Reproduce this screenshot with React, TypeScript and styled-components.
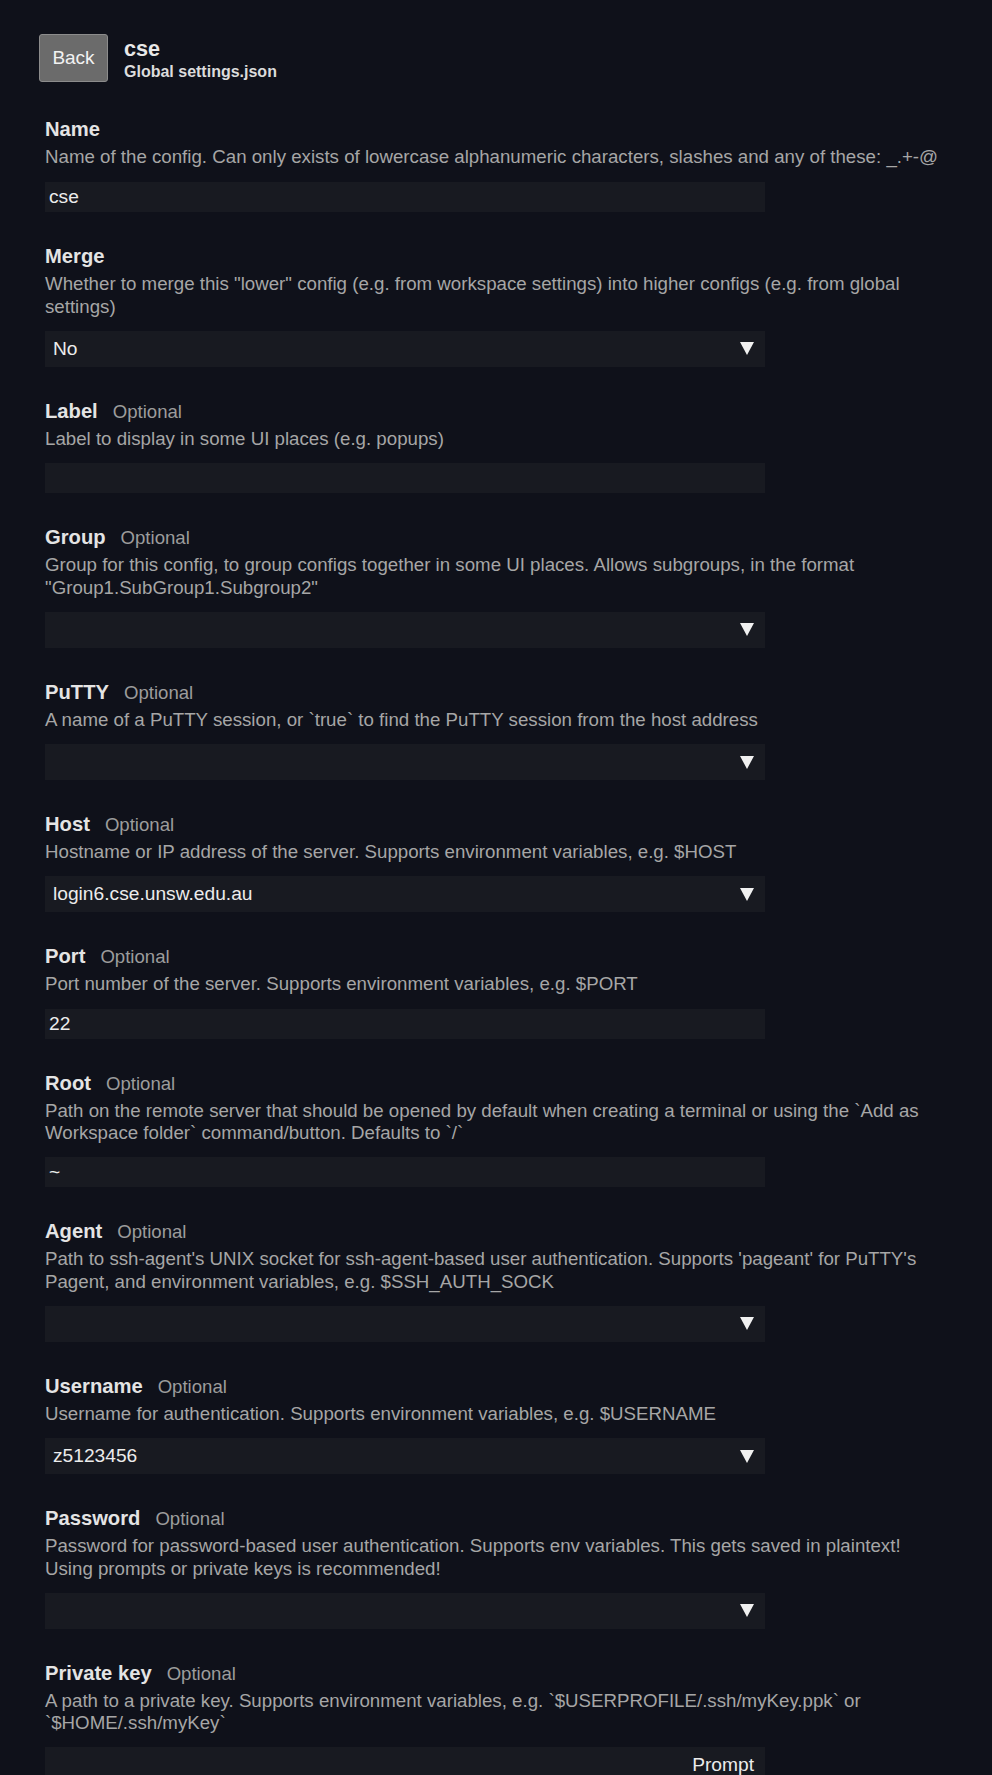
import React from "react";
import styled, { createGlobalStyle } from "styled-components";

const GlobalStyle = createGlobalStyle`
  html, body {
    margin: 0;
    padding: 0;
    background: #0f111a;
  }
  body {
    font-family: "Liberation Sans", Arial, sans-serif;
    color: #e6e6e6;
  }
`;

const Page = styled.div`
  min-height: 1775px;
  box-sizing: border-box;
  padding: 34px 45px 0 39px;
  background: #0f111a;
`;

const Header = styled.header`
  display: flex;
  align-items: flex-start;
  gap: 16px;
`;

const BackButton = styled.button`
  width: 69px;
  height: 48px;
  box-sizing: border-box;
  background: #6b6b6b;
  border: 1px solid #8c8c8c;
  border-radius: 3px;
  color: #f2f2f2;
  font-family: "Liberation Sans", Arial, sans-serif;
  font-size: 19px;
  padding: 0;
  cursor: pointer;
`;

const TitleBlock = styled.div`
  display: flex;
  flex-direction: column;
  padding-top: 1.5px;
`;

const Title = styled.div`
  font-size: 21.6px;
  line-height: 26px;
  font-weight: bold;
  color: #e8e8e8;
`;

const Subtitle = styled.div`
  font-size: 16px;
  line-height: 18px;
  font-weight: bold;
  color: #dcdcdc;
  margin-top: 1px;
`;

const Form = styled.div`
  margin: 36px 0 0 6px;
  display: flex;
  flex-direction: column;
  gap: 33.2px;
`;

const Field = styled.section`
  display: flex;
  flex-direction: column;
`;

const LabelRow = styled.div`
  display: flex;
  align-items: baseline;
  gap: 15px;
  height: 23px;
  line-height: 23px;
`;

const LabelText = styled.span`
  font-size: 20.2px;
  font-weight: bold;
  color: #e4e4e4;
`;

const OptionalTag = styled.span`
  font-size: 18.6px;
  color: #9c9c9c;
`;

const Description = styled.div`
  margin-top: 5px;
  font-size: 18.7px;
  line-height: 22.3px;
  color: #a6a6a6;
`;

const Control = styled.div<{ $tall?: boolean; $spaced?: boolean }>`
  margin-top: ${(p) => (p.$spaced ? "14px" : "12.8px")};
  width: 720px;
  height: ${(p) => (p.$tall ? "36px" : "30px")};
  box-sizing: border-box;
  background: #181a21;
  display: flex;
  align-items: center;
  padding: ${(p) => (p.$tall ? "0 11px 0 8px" : "0 4px")};
  font-size: 19.2px;
  color: #ececec;
`;

const Value = styled.span`
  flex: 1;
  white-space: nowrap;
`;

const RightValue = styled.span`
  flex: 1;
  text-align: right;
`;

const Arrow = () => (
  <svg width="14" height="13" viewBox="0 0 14 13" aria-hidden="true">
    <polygon points="0,0 14,0 7,13" fill="#f0f0f0" />
  </svg>
);

type Kind = "input" | "select" | "prompt";

interface FieldDef {
  label: string;
  optional?: boolean;
  desc: string;
  kind: Kind;
  value?: string;
  spaced?: boolean;
}

const fields: FieldDef[] = [
  {
    label: "Name",
    desc: "Name of the config. Can only exists of lowercase alphanumeric characters, slashes and any of these: _.+-@",
    kind: "input",
    value: "cse",
    spaced: true,
  },
  {
    label: "Merge",
    desc: 'Whether to merge this "lower" config (e.g. from workspace settings) into higher configs (e.g. from global settings)',
    kind: "select",
    value: "No",
  },
  {
    label: "Label",
    optional: true,
    desc: "Label to display in some UI places (e.g. popups)",
    kind: "input",
  },
  {
    label: "Group",
    optional: true,
    desc: 'Group for this config, to group configs together in some UI places. Allows subgroups, in the format "Group1.SubGroup1.Subgroup2"',
    kind: "select",
  },
  {
    label: "PuTTY",
    optional: true,
    desc: "A name of a PuTTY session, or `true` to find the PuTTY session from the host address",
    kind: "select",
  },
  {
    label: "Host",
    optional: true,
    desc: "Hostname or IP address of the server. Supports environment variables, e.g. $HOST",
    kind: "select",
    value: "login6.cse.unsw.edu.au",
  },
  {
    label: "Port",
    optional: true,
    desc: "Port number of the server. Supports environment variables, e.g. $PORT",
    kind: "input",
    value: "22",
  },
  {
    label: "Root",
    optional: true,
    desc: "Path on the remote server that should be opened by default when creating a terminal or using the `Add as Workspace folder` command/button. Defaults to `/`",
    kind: "input",
    value: "~",
  },
  {
    label: "Agent",
    optional: true,
    desc: "Path to ssh-agent's UNIX socket for ssh-agent-based user authentication. Supports 'pageant' for PuTTY's Pagent, and environment variables, e.g. $SSH_AUTH_SOCK",
    kind: "select",
  },
  {
    label: "Username",
    optional: true,
    desc: "Username for authentication. Supports environment variables, e.g. $USERNAME",
    kind: "select",
    value: "z5123456",
  },
  {
    label: "Password",
    optional: true,
    desc: "Password for password-based user authentication. Supports env variables. This gets saved in plaintext! Using prompts or private keys is recommended!",
    kind: "select",
  },
  {
    label: "Private key",
    optional: true,
    desc: "A path to a private key. Supports environment variables, e.g. `$USERPROFILE/.ssh/myKey.ppk` or `$HOME/.ssh/myKey`",
    kind: "prompt",
    value: "Prompt",
  },
];

const FieldControl = ({ f }: { f: FieldDef }) => {
  if (f.kind === "input") {
    return (
      <Control $spaced={f.spaced}>
        <Value>{f.value ?? ""}</Value>
      </Control>
    );
  }
  if (f.kind === "prompt") {
    return (
      <Control $tall $spaced={f.spaced}>
        <RightValue>{f.value}</RightValue>
      </Control>
    );
  }
  return (
    <Control $tall $spaced={f.spaced}>
      <Value>{f.value ?? ""}</Value>
      <Arrow />
    </Control>
  );
};

export default function App() {
  return (
    <>
      <GlobalStyle />
      <Page>
        <Header>
          <BackButton>Back</BackButton>
          <TitleBlock>
            <Title>cse</Title>
            <Subtitle>Global settings.json</Subtitle>
          </TitleBlock>
        </Header>
        <Form>
          {fields.map((f) => (
            <Field key={f.label}>
              <LabelRow>
                <LabelText>{f.label}</LabelText>
                {f.optional && <OptionalTag>Optional</OptionalTag>}
              </LabelRow>
              <Description>{f.desc}</Description>
              <FieldControl f={f} />
            </Field>
          ))}
        </Form>
      </Page>
    </>
  );
}
